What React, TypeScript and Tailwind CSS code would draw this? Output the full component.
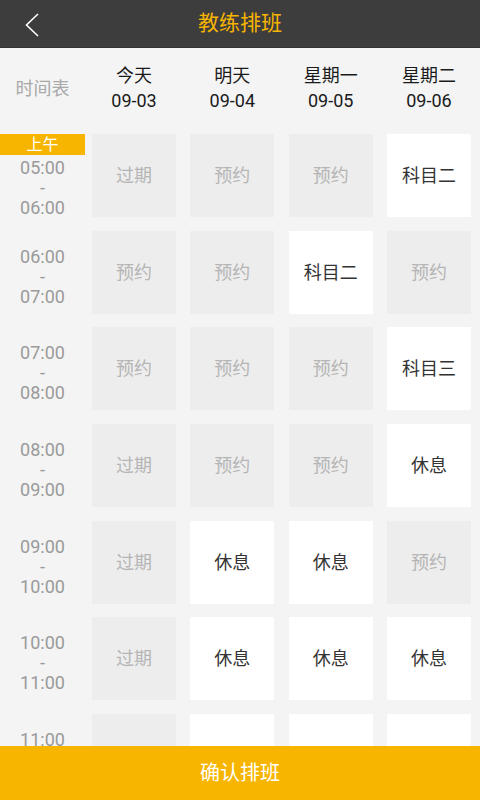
import React from "react";

type Slot = { label: string; open: boolean };

const days = [
  { name: "今天", date: "09-03" },
  { name: "明天", date: "09-04" },
  { name: "星期一", date: "09-05" },
  { name: "星期二", date: "09-06" },
];

const g = (label: string): Slot => ({ label, open: false });
const w = (label: string): Slot => ({ label, open: true });

const rows: { from: string; to: string; badge?: string; slots: Slot[] }[] = [
  { from: "05:00", to: "06:00", badge: "上午", slots: [g("过期"), g("预约"), g("预约"), w("科目二")] },
  { from: "06:00", to: "07:00", slots: [g("预约"), g("预约"), w("科目二"), g("预约")] },
  { from: "07:00", to: "08:00", slots: [g("预约"), g("预约"), g("预约"), w("科目三")] },
  { from: "08:00", to: "09:00", slots: [g("过期"), g("预约"), g("预约"), w("休息")] },
  { from: "09:00", to: "10:00", slots: [g("过期"), w("休息"), w("休息"), g("预约")] },
  { from: "10:00", to: "11:00", slots: [g("过期"), w("休息"), w("休息"), w("休息")] },
  // last row sits mostly under the confirm bar
  { from: "11:00", to: "12:00", slots: [g(""), w(""), w(""), w("")] },
];

export default function App() {
  return (
    <div
      className="w-[480px] h-[800px] flex flex-col bg-[#f4f4f4] overflow-hidden"
      style={{ fontFamily: 'Roboto, "Noto Sans CJK SC", sans-serif' }}
    >
      {/* Header */}
      <div className="h-[48px] shrink-0 bg-[#3d3d3d] border-b border-[#333333] flex items-center relative">
        <svg className="absolute left-[24px] top-[12px]" width="16" height="26" viewBox="0 0 16 26" fill="none">
          <path d="M14 2 L2.5 13 L14 24" stroke="#ffffff" strokeWidth="1.6" />
        </svg>
        <div className="flex-1 text-center text-[21px] text-[#f7b500]">教练排班</div>
      </div>

      {/* Schedule */}
      <div className="flex-1 overflow-hidden">
        <div className="flex h-[86px] pt-[15px]">
          <div className="w-[92px] pr-[7px] flex items-center justify-center pb-[21px] text-[18px] text-[#a9a9a9]">
            时间表
          </div>
          <div className="flex gap-[14.33px]">
            {days.map((d) => (
              <div key={d.date} className="w-[84px] text-center text-[18px] leading-[25px] text-[#1a1a1a]">
                <div>{d.name}</div>
                <div>{d.date}</div>
              </div>
            ))}
          </div>
        </div>

        <div className="flex flex-col gap-[13.7px]">
          {rows.map((r) => (
            <div key={r.from} className="flex h-[83px]">
              <div className="w-[92px] pr-[7px] flex flex-col">
                {r.badge && (
                  <div className="h-[21px] bg-[#f7b500] text-white text-[16px] leading-[21px] text-center">
                    {r.badge}
                  </div>
                )}
                <div
                  className={`text-center text-[18px] leading-[20px] text-[#9a9a9a] ${
                    r.badge ? "pt-[3px]" : "pt-[16px]"
                  }`}
                >
                  <div>{r.from}</div>
                  <div>-</div>
                  <div>{r.to}</div>
                </div>
              </div>
              <div className="flex gap-[14.33px]">
                {r.slots.map((s, i) => (
                  <div
                    key={i}
                    className={`w-[84px] h-[83px] flex items-center justify-center text-[18px] ${
                      s.open ? "bg-white text-[#333333]" : "bg-[#ededed] text-[#b5b5b5]"
                    }`}
                  >
                    {s.label}
                  </div>
                ))}
              </div>
            </div>
          ))}
        </div>
      </div>

      {/* Confirm */}
      <button className="h-[54px] shrink-0 bg-[#f7b500] text-white text-[20px]">确认排班</button>
    </div>
  );
}
